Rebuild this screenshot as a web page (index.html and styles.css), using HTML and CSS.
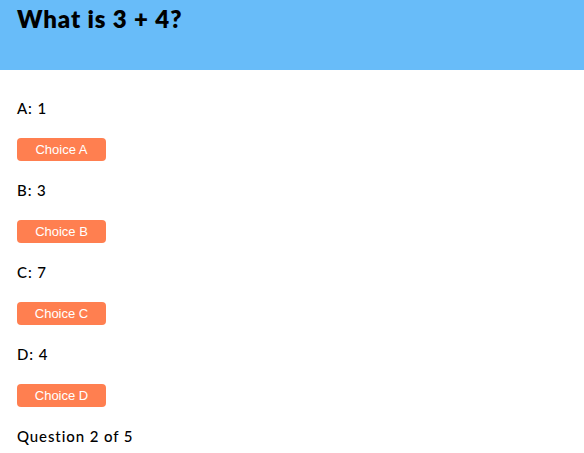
FILE: index.html
```html
<!DOCTYPE html>
<html>
<head>
<meta charset="utf-8">
<link rel="stylesheet" href="styles.css">
</head>
<body>
<header class="header"><h1 class="title">What is 3 + 4?</h1></header>
<main class="quiz">
  <p class="answer">A: 1</p>
  <button class="choice">Choice A</button>
  <p class="answer">B: 3</p>
  <button class="choice">Choice B</button>
  <p class="answer">C: 7</p>
  <button class="choice">Choice C</button>
  <p class="answer">D: 4</p>
  <button class="choice">Choice D</button>
  <p class="answer">Question 2 of 5</p>
</main>
</body>
</html>
```
FILE: styles.css
```css
html, body { margin: 0; padding: 0; background: #fff; }
body { font-family: "Lato", "Open Sans", sans-serif; color: #000; }
.header { background: #68bcf9; height: 70px; padding: 0 17px; box-sizing: border-box; }
.title { margin: 0; padding-top: 5px; font-size: 24px; line-height: 28px; font-weight: 800; letter-spacing: 0.9px; }
.quiz { display: flex; flex-direction: column; align-items: flex-start; padding: 29px 17px 0; }
.answer { margin: 20px 0 0; font-size: 15px; line-height: 18px; font-weight: 500; letter-spacing: 0.9px; }
.answer:first-child { margin-top: 0; }
.choice { margin-top: 21px; width: 89px; height: 23px; border: 0; border-radius: 4px; background: #ff7f50; color: #fff; font-family: "Liberation Sans", Arial, sans-serif; font-size: 13px; padding: 0; }
```
